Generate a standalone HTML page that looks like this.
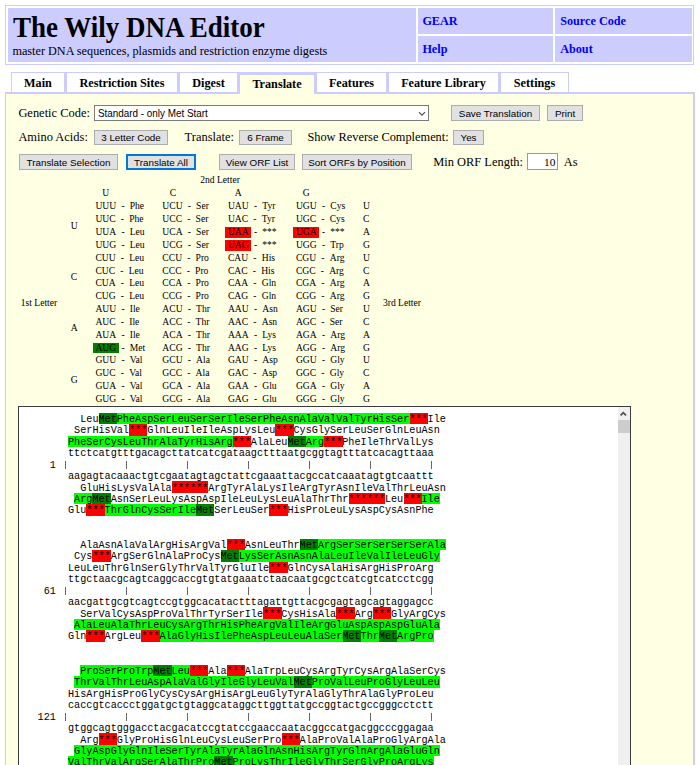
<!DOCTYPE html>
<html><head><meta charset="utf-8"><style>
html,body{margin:0;padding:0;background:#fff;width:700px;height:765px;overflow:hidden;position:relative}
.t{position:absolute;line-height:0;white-space:pre}
.r{position:absolute}
.cp{padding:0 2.75px}
.seq{position:absolute;white-space:pre;font-family:'Liberation Mono',monospace;color:#000;overflow:hidden;width:549px;height:360px}
</style></head><body>
<div class="r" style="left:5px;top:5px;width:689px;height:60px;border:1px solid #ccccff;box-sizing:border-box"></div>
<div class="r" style="left:8px;top:8px;width:408px;height:54px;background:#ccccff"></div>
<div class="r" style="left:418px;top:8px;width:135px;height:26px;background:#ccccff"></div>
<div class="r" style="left:555px;top:8px;width:137px;height:26px;background:#ccccff"></div>
<div class="r" style="left:418px;top:36px;width:135px;height:26px;background:#ccccff"></div>
<div class="r" style="left:555px;top:36px;width:137px;height:26px;background:#ccccff"></div>
<div class="t" style="left:13.00px;top:27.59px;font-family:'Liberation Serif', serif;font-size:27.0px;font-weight:bold;color:#000;transform:scale(1,1.06);transform-origin:0 9.11px">The Wily DNA Editor</div>
<div class="t" style="left:12.40px;top:50.98px;font-family:'Liberation Serif', serif;font-size:12.22px;font-weight:normal;color:#000;">master DNA sequences, plasmids and restriction enzyme digests</div>
<div class="t" style="left:422.40px;top:20.68px;font-family:'Liberation Serif', serif;font-size:12.2px;font-weight:bold;color:#0000ff;">GEAR</div>
<div class="t" style="left:422.40px;top:49.08px;font-family:'Liberation Serif', serif;font-size:12.2px;font-weight:bold;color:#0000ff;">Help</div>
<div class="t" style="left:560.20px;top:20.98px;font-family:'Liberation Serif', serif;font-size:12.2px;font-weight:bold;color:#0000ff;">Source Code</div>
<div class="t" style="left:560.20px;top:48.98px;font-family:'Liberation Serif', serif;font-size:12.2px;font-weight:bold;color:#0000ff;">About</div>
<div class="r" style="left:5px;top:92px;width:690px;height:700px;background:#ffffe4;border-top:2px solid #ccccff;border-left:1px solid #ccccff;border-right:2px solid #ccccff;box-sizing:border-box"></div>
<div class="r" style="left:11px;top:72px;width:558px;height:22px;background:#ccccff"></div>
<div class="r" style="left:12px;top:73px;width:52px;height:19px;background:#fff"></div>
<div class="t" style="left:12px;width:52px;text-align:center;top:82.58px;font-family:'Liberation Serif', serif;font-size:12.2px;font-weight:bold">Main</div>
<div class="r" style="left:67px;top:73px;width:110px;height:19px;background:#fff"></div>
<div class="t" style="left:67px;width:110px;text-align:center;top:82.58px;font-family:'Liberation Serif', serif;font-size:12.2px;font-weight:bold">Restriction Sites</div>
<div class="r" style="left:180px;top:73px;width:57px;height:19px;background:#fff"></div>
<div class="t" style="left:180px;width:57px;text-align:center;top:82.58px;font-family:'Liberation Serif', serif;font-size:12.2px;font-weight:bold">Digest</div>
<div class="r" style="left:240px;top:73px;width:74px;height:2px;background:#ccccff"></div>
<div class="r" style="left:240px;top:75px;width:74px;height:20px;background:#ffffe4"></div>
<div class="t" style="left:240px;width:74px;text-align:center;top:84.38px;font-family:'Liberation Serif', serif;font-size:12.2px;font-weight:bold">Translate</div>
<div class="r" style="left:317px;top:73px;width:69px;height:19px;background:#fff"></div>
<div class="t" style="left:317px;width:69px;text-align:center;top:82.58px;font-family:'Liberation Serif', serif;font-size:12.2px;font-weight:bold">Features</div>
<div class="r" style="left:389px;top:73px;width:109px;height:19px;background:#fff"></div>
<div class="t" style="left:389px;width:109px;text-align:center;top:82.58px;font-family:'Liberation Serif', serif;font-size:12.2px;font-weight:bold">Feature Library</div>
<div class="r" style="left:501px;top:73px;width:67px;height:19px;background:#fff"></div>
<div class="t" style="left:501px;width:67px;text-align:center;top:82.58px;font-family:'Liberation Serif', serif;font-size:12.2px;font-weight:bold">Settings</div>
<div class="t" style="left:18.40px;top:112.50px;font-family:'Liberation Serif', serif;font-size:12.45px;font-weight:normal;color:#000;">Genetic Code:</div>
<div class="r" style="left:94px;top:105px;width:335px;height:16px;background:#fff;border:1px solid #7a7a7a;box-sizing:border-box"></div>
<div class="t" style="left:98.00px;top:113.57px;font-family:'Liberation Sans', sans-serif;font-size:9.9px;font-weight:normal;color:#000;transform:scale(1,1.07);transform-origin:0 3.43px">Standard - only Met Start</div>
<svg class="r" style="left:416px;top:109px" width="12" height="9"><path d="M3 3.2 L6 6.2 L9 3.2" fill="none" stroke="#4a4a4a" stroke-width="1.1"/></svg>
<div class="r" style="left:451px;top:105px;width:89px;height:16px;background:#e1e1e1;border:1px solid #adadad;box-sizing:border-box"></div>
<div class="t" style="left:451px;width:89px;text-align:center;top:113.59px;font-family:'Liberation Sans', sans-serif;font-size:9.85px;color:#000">Save Translation</div>
<div class="r" style="left:547px;top:105px;width:36px;height:16px;background:#e1e1e1;border:1px solid #adadad;box-sizing:border-box"></div>
<div class="t" style="left:547px;width:36px;text-align:center;top:113.59px;font-family:'Liberation Sans', sans-serif;font-size:9.85px;color:#000">Print</div>
<div class="t" style="left:18.40px;top:137.20px;font-family:'Liberation Serif', serif;font-size:12.45px;font-weight:normal;color:#000;">Amino Acids:</div>
<div class="r" style="left:94px;top:130px;width:74px;height:15px;background:#e1e1e1;border:1px solid #adadad;box-sizing:border-box"></div>
<div class="t" style="left:94px;width:74px;text-align:center;top:138.09px;font-family:'Liberation Sans', sans-serif;font-size:9.85px;color:#000">3 Letter Code</div>
<div class="t" style="left:184.60px;top:137.20px;font-family:'Liberation Serif', serif;font-size:12.45px;font-weight:normal;color:#000;">Translate:</div>
<div class="r" style="left:239px;top:130px;width:53px;height:15px;background:#e1e1e1;border:1px solid #adadad;box-sizing:border-box"></div>
<div class="t" style="left:239px;width:53px;text-align:center;top:138.09px;font-family:'Liberation Sans', sans-serif;font-size:9.85px;color:#000">6 Frame</div>
<div class="t" style="left:307.40px;top:137.23px;font-family:'Liberation Serif', serif;font-size:12.35px;font-weight:normal;color:#000;">Show Reverse Complement:</div>
<div class="r" style="left:453px;top:130px;width:31px;height:15px;background:#e1e1e1;border:1px solid #adadad;box-sizing:border-box"></div>
<div class="t" style="left:453px;width:31px;text-align:center;top:138.09px;font-family:'Liberation Sans', sans-serif;font-size:9.85px;color:#000">Yes</div>
<div class="r" style="left:19px;top:154px;width:99px;height:16px;background:#e1e1e1;border:1px solid #adadad;box-sizing:border-box"></div>
<div class="t" style="left:19px;width:99px;text-align:center;top:162.59px;font-family:'Liberation Sans', sans-serif;font-size:9.85px;color:#000">Translate Selection</div>
<div class="r" style="left:126px;top:154px;width:70px;height:16px;background:#e1e1e1;border:2px solid #0078d7;box-sizing:border-box"></div>
<div class="t" style="left:126px;width:70px;text-align:center;top:162.59px;font-family:'Liberation Sans', sans-serif;font-size:9.85px;color:#000">Translate All</div>
<div class="r" style="left:219px;top:154px;width:76px;height:16px;background:#e1e1e1;border:1px solid #adadad;box-sizing:border-box"></div>
<div class="t" style="left:219px;width:76px;text-align:center;top:162.59px;font-family:'Liberation Sans', sans-serif;font-size:9.85px;color:#000">View ORF List</div>
<div class="r" style="left:302px;top:154px;width:110px;height:16px;background:#e1e1e1;border:1px solid #adadad;box-sizing:border-box"></div>
<div class="t" style="left:302px;width:110px;text-align:center;top:162.59px;font-family:'Liberation Sans', sans-serif;font-size:9.85px;color:#000">Sort ORFs by Position</div>
<div class="t" style="left:433.20px;top:161.60px;font-family:'Liberation Serif', serif;font-size:12.45px;font-weight:normal;color:#000;">Min ORF Length:</div>
<div class="r" style="left:527px;top:153px;width:31px;height:17px;background:#fff;border:1px solid #9a9a9a;box-sizing:border-box"></div>
<div class="t" style="left:544.00px;top:162.15px;font-family:'Liberation Serif', serif;font-size:11.4px;font-weight:normal;color:#000;">10</div>
<div class="t" style="left:563.70px;top:161.60px;font-family:'Liberation Serif', serif;font-size:12.45px;font-weight:normal;color:#000;">As</div>
<div class="t" style="left:200.20px;top:180.46px;font-family:'Liberation Serif', serif;font-size:9.6px;font-weight:normal;color:#000;">2nd Letter</div>
<div class="t" style="left:102.30px;top:193.06px;font-family:'Liberation Serif', serif;font-size:9.6px;font-weight:normal;color:#000;">U</div>
<div class="t" style="left:169.80px;top:193.06px;font-family:'Liberation Serif', serif;font-size:9.6px;font-weight:normal;color:#000;">C</div>
<div class="t" style="left:234.80px;top:193.06px;font-family:'Liberation Serif', serif;font-size:9.6px;font-weight:normal;color:#000;">A</div>
<div class="t" style="left:302.80px;top:193.06px;font-family:'Liberation Serif', serif;font-size:9.6px;font-weight:normal;color:#000;">G</div>
<div class="t" style="left:92.70px;top:206.46px;font-family:'Liberation Serif', serif;font-size:9.6px"><span class="cp">UUU</span> - <span class="cp">Phe</span></div>
<div class="t" style="left:159.60px;top:206.46px;font-family:'Liberation Serif', serif;font-size:9.6px"><span class="cp">UCU</span> - <span class="cp">Ser</span></div>
<div class="t" style="left:225.20px;top:206.46px;font-family:'Liberation Serif', serif;font-size:9.6px"><span class="cp">UAU</span> - <span class="cp">Tyr</span></div>
<div class="t" style="left:293.20px;top:206.46px;font-family:'Liberation Serif', serif;font-size:9.6px"><span class="cp">UGU</span> - <span class="cp">Cys</span></div>
<div class="t" style="left:362.90px;top:206.46px;font-family:'Liberation Serif', serif;font-size:9.6px;font-weight:normal;color:#000;">U</div>
<div class="t" style="left:92.70px;top:219.29px;font-family:'Liberation Serif', serif;font-size:9.6px"><span class="cp">UUC</span> - <span class="cp">Phe</span></div>
<div class="t" style="left:159.60px;top:219.29px;font-family:'Liberation Serif', serif;font-size:9.6px"><span class="cp">UCC</span> - <span class="cp">Ser</span></div>
<div class="t" style="left:225.20px;top:219.29px;font-family:'Liberation Serif', serif;font-size:9.6px"><span class="cp">UAC</span> - <span class="cp">Tyr</span></div>
<div class="t" style="left:293.20px;top:219.29px;font-family:'Liberation Serif', serif;font-size:9.6px"><span class="cp">UGC</span> - <span class="cp">Cys</span></div>
<div class="t" style="left:362.90px;top:219.29px;font-family:'Liberation Serif', serif;font-size:9.6px;font-weight:normal;color:#000;">C</div>
<div class="t" style="left:92.70px;top:232.12px;font-family:'Liberation Serif', serif;font-size:9.6px"><span class="cp">UUA</span> - <span class="cp">Leu</span></div>
<div class="t" style="left:159.60px;top:232.12px;font-family:'Liberation Serif', serif;font-size:9.6px"><span class="cp">UCA</span> - <span class="cp">Ser</span></div>
<div class="r" style="left:225.20px;top:227.06px;width:26.3px;height:10.7px;background:#ff0000"></div>
<div class="t" style="left:225.20px;top:232.12px;font-family:'Liberation Serif', serif;font-size:9.6px"><span class="cp">UAA</span> - <span class="cp">***</span></div>
<div class="r" style="left:293.20px;top:227.06px;width:26.3px;height:10.7px;background:#ff0000"></div>
<div class="t" style="left:293.20px;top:232.12px;font-family:'Liberation Serif', serif;font-size:9.6px"><span class="cp">UGA</span> - <span class="cp">***</span></div>
<div class="t" style="left:362.90px;top:232.12px;font-family:'Liberation Serif', serif;font-size:9.6px;font-weight:normal;color:#000;">A</div>
<div class="t" style="left:92.70px;top:244.95px;font-family:'Liberation Serif', serif;font-size:9.6px"><span class="cp">UUG</span> - <span class="cp">Leu</span></div>
<div class="t" style="left:159.60px;top:244.95px;font-family:'Liberation Serif', serif;font-size:9.6px"><span class="cp">UCG</span> - <span class="cp">Ser</span></div>
<div class="r" style="left:225.20px;top:239.89px;width:26.3px;height:10.7px;background:#ff0000"></div>
<div class="t" style="left:225.20px;top:244.95px;font-family:'Liberation Serif', serif;font-size:9.6px"><span class="cp">UAG</span> - <span class="cp">***</span></div>
<div class="t" style="left:293.20px;top:244.95px;font-family:'Liberation Serif', serif;font-size:9.6px"><span class="cp">UGG</span> - <span class="cp">Trp</span></div>
<div class="t" style="left:362.90px;top:244.95px;font-family:'Liberation Serif', serif;font-size:9.6px;font-weight:normal;color:#000;">G</div>
<div class="t" style="left:70.70px;top:225.70px;font-family:'Liberation Serif', serif;font-size:9.6px;font-weight:normal;color:#000;">U</div>
<div class="t" style="left:92.70px;top:257.78px;font-family:'Liberation Serif', serif;font-size:9.6px"><span class="cp">CUU</span> - <span class="cp">Leu</span></div>
<div class="t" style="left:159.60px;top:257.78px;font-family:'Liberation Serif', serif;font-size:9.6px"><span class="cp">CCU</span> - <span class="cp">Pro</span></div>
<div class="t" style="left:225.20px;top:257.78px;font-family:'Liberation Serif', serif;font-size:9.6px"><span class="cp">CAU</span> - <span class="cp">His</span></div>
<div class="t" style="left:293.20px;top:257.78px;font-family:'Liberation Serif', serif;font-size:9.6px"><span class="cp">CGU</span> - <span class="cp">Arg</span></div>
<div class="t" style="left:362.90px;top:257.78px;font-family:'Liberation Serif', serif;font-size:9.6px;font-weight:normal;color:#000;">U</div>
<div class="t" style="left:92.70px;top:270.61px;font-family:'Liberation Serif', serif;font-size:9.6px"><span class="cp">CUC</span> - <span class="cp">Leu</span></div>
<div class="t" style="left:159.60px;top:270.61px;font-family:'Liberation Serif', serif;font-size:9.6px"><span class="cp">CCC</span> - <span class="cp">Pro</span></div>
<div class="t" style="left:225.20px;top:270.61px;font-family:'Liberation Serif', serif;font-size:9.6px"><span class="cp">CAC</span> - <span class="cp">His</span></div>
<div class="t" style="left:293.20px;top:270.61px;font-family:'Liberation Serif', serif;font-size:9.6px"><span class="cp">CGC</span> - <span class="cp">Arg</span></div>
<div class="t" style="left:362.90px;top:270.61px;font-family:'Liberation Serif', serif;font-size:9.6px;font-weight:normal;color:#000;">C</div>
<div class="t" style="left:92.70px;top:283.44px;font-family:'Liberation Serif', serif;font-size:9.6px"><span class="cp">CUA</span> - <span class="cp">Leu</span></div>
<div class="t" style="left:159.60px;top:283.44px;font-family:'Liberation Serif', serif;font-size:9.6px"><span class="cp">CCA</span> - <span class="cp">Pro</span></div>
<div class="t" style="left:225.20px;top:283.44px;font-family:'Liberation Serif', serif;font-size:9.6px"><span class="cp">CAA</span> - <span class="cp">Gln</span></div>
<div class="t" style="left:293.20px;top:283.44px;font-family:'Liberation Serif', serif;font-size:9.6px"><span class="cp">CGA</span> - <span class="cp">Arg</span></div>
<div class="t" style="left:362.90px;top:283.44px;font-family:'Liberation Serif', serif;font-size:9.6px;font-weight:normal;color:#000;">A</div>
<div class="t" style="left:92.70px;top:296.27px;font-family:'Liberation Serif', serif;font-size:9.6px"><span class="cp">CUG</span> - <span class="cp">Leu</span></div>
<div class="t" style="left:159.60px;top:296.27px;font-family:'Liberation Serif', serif;font-size:9.6px"><span class="cp">CCG</span> - <span class="cp">Pro</span></div>
<div class="t" style="left:225.20px;top:296.27px;font-family:'Liberation Serif', serif;font-size:9.6px"><span class="cp">CAG</span> - <span class="cp">Gln</span></div>
<div class="t" style="left:293.20px;top:296.27px;font-family:'Liberation Serif', serif;font-size:9.6px"><span class="cp">CGG</span> - <span class="cp">Arg</span></div>
<div class="t" style="left:362.90px;top:296.27px;font-family:'Liberation Serif', serif;font-size:9.6px;font-weight:normal;color:#000;">G</div>
<div class="t" style="left:70.70px;top:277.02px;font-family:'Liberation Serif', serif;font-size:9.6px;font-weight:normal;color:#000;">C</div>
<div class="t" style="left:92.70px;top:309.10px;font-family:'Liberation Serif', serif;font-size:9.6px"><span class="cp">AUU</span> - <span class="cp">Ile</span></div>
<div class="t" style="left:159.60px;top:309.10px;font-family:'Liberation Serif', serif;font-size:9.6px"><span class="cp">ACU</span> - <span class="cp">Thr</span></div>
<div class="t" style="left:225.20px;top:309.10px;font-family:'Liberation Serif', serif;font-size:9.6px"><span class="cp">AAU</span> - <span class="cp">Asn</span></div>
<div class="t" style="left:293.20px;top:309.10px;font-family:'Liberation Serif', serif;font-size:9.6px"><span class="cp">AGU</span> - <span class="cp">Ser</span></div>
<div class="t" style="left:362.90px;top:309.10px;font-family:'Liberation Serif', serif;font-size:9.6px;font-weight:normal;color:#000;">U</div>
<div class="t" style="left:92.70px;top:321.93px;font-family:'Liberation Serif', serif;font-size:9.6px"><span class="cp">AUC</span> - <span class="cp">Ile</span></div>
<div class="t" style="left:159.60px;top:321.93px;font-family:'Liberation Serif', serif;font-size:9.6px"><span class="cp">ACC</span> - <span class="cp">Thr</span></div>
<div class="t" style="left:225.20px;top:321.93px;font-family:'Liberation Serif', serif;font-size:9.6px"><span class="cp">AAC</span> - <span class="cp">Asn</span></div>
<div class="t" style="left:293.20px;top:321.93px;font-family:'Liberation Serif', serif;font-size:9.6px"><span class="cp">AGC</span> - <span class="cp">Ser</span></div>
<div class="t" style="left:362.90px;top:321.93px;font-family:'Liberation Serif', serif;font-size:9.6px;font-weight:normal;color:#000;">C</div>
<div class="t" style="left:92.70px;top:334.76px;font-family:'Liberation Serif', serif;font-size:9.6px"><span class="cp">AUA</span> - <span class="cp">Ile</span></div>
<div class="t" style="left:159.60px;top:334.76px;font-family:'Liberation Serif', serif;font-size:9.6px"><span class="cp">ACA</span> - <span class="cp">Thr</span></div>
<div class="t" style="left:225.20px;top:334.76px;font-family:'Liberation Serif', serif;font-size:9.6px"><span class="cp">AAA</span> - <span class="cp">Lys</span></div>
<div class="t" style="left:293.20px;top:334.76px;font-family:'Liberation Serif', serif;font-size:9.6px"><span class="cp">AGA</span> - <span class="cp">Arg</span></div>
<div class="t" style="left:362.90px;top:334.76px;font-family:'Liberation Serif', serif;font-size:9.6px;font-weight:normal;color:#000;">A</div>
<div class="r" style="left:92.70px;top:342.53px;width:26.3px;height:10.7px;background:#008000"></div>
<div class="t" style="left:92.70px;top:347.59px;font-family:'Liberation Serif', serif;font-size:9.6px"><span class="cp">AUG</span> - <span class="cp">Met</span></div>
<div class="t" style="left:159.60px;top:347.59px;font-family:'Liberation Serif', serif;font-size:9.6px"><span class="cp">ACG</span> - <span class="cp">Thr</span></div>
<div class="t" style="left:225.20px;top:347.59px;font-family:'Liberation Serif', serif;font-size:9.6px"><span class="cp">AAG</span> - <span class="cp">Lys</span></div>
<div class="t" style="left:293.20px;top:347.59px;font-family:'Liberation Serif', serif;font-size:9.6px"><span class="cp">AGG</span> - <span class="cp">Arg</span></div>
<div class="t" style="left:362.90px;top:347.59px;font-family:'Liberation Serif', serif;font-size:9.6px;font-weight:normal;color:#000;">G</div>
<div class="t" style="left:70.70px;top:328.34px;font-family:'Liberation Serif', serif;font-size:9.6px;font-weight:normal;color:#000;">A</div>
<div class="t" style="left:92.70px;top:360.42px;font-family:'Liberation Serif', serif;font-size:9.6px"><span class="cp">GUU</span> - <span class="cp">Val</span></div>
<div class="t" style="left:159.60px;top:360.42px;font-family:'Liberation Serif', serif;font-size:9.6px"><span class="cp">GCU</span> - <span class="cp">Ala</span></div>
<div class="t" style="left:225.20px;top:360.42px;font-family:'Liberation Serif', serif;font-size:9.6px"><span class="cp">GAU</span> - <span class="cp">Asp</span></div>
<div class="t" style="left:293.20px;top:360.42px;font-family:'Liberation Serif', serif;font-size:9.6px"><span class="cp">GGU</span> - <span class="cp">Gly</span></div>
<div class="t" style="left:362.90px;top:360.42px;font-family:'Liberation Serif', serif;font-size:9.6px;font-weight:normal;color:#000;">U</div>
<div class="t" style="left:92.70px;top:373.25px;font-family:'Liberation Serif', serif;font-size:9.6px"><span class="cp">GUC</span> - <span class="cp">Val</span></div>
<div class="t" style="left:159.60px;top:373.25px;font-family:'Liberation Serif', serif;font-size:9.6px"><span class="cp">GCC</span> - <span class="cp">Ala</span></div>
<div class="t" style="left:225.20px;top:373.25px;font-family:'Liberation Serif', serif;font-size:9.6px"><span class="cp">GAC</span> - <span class="cp">Asp</span></div>
<div class="t" style="left:293.20px;top:373.25px;font-family:'Liberation Serif', serif;font-size:9.6px"><span class="cp">GGC</span> - <span class="cp">Gly</span></div>
<div class="t" style="left:362.90px;top:373.25px;font-family:'Liberation Serif', serif;font-size:9.6px;font-weight:normal;color:#000;">C</div>
<div class="t" style="left:92.70px;top:386.08px;font-family:'Liberation Serif', serif;font-size:9.6px"><span class="cp">GUA</span> - <span class="cp">Val</span></div>
<div class="t" style="left:159.60px;top:386.08px;font-family:'Liberation Serif', serif;font-size:9.6px"><span class="cp">GCA</span> - <span class="cp">Ala</span></div>
<div class="t" style="left:225.20px;top:386.08px;font-family:'Liberation Serif', serif;font-size:9.6px"><span class="cp">GAA</span> - <span class="cp">Glu</span></div>
<div class="t" style="left:293.20px;top:386.08px;font-family:'Liberation Serif', serif;font-size:9.6px"><span class="cp">GGA</span> - <span class="cp">Gly</span></div>
<div class="t" style="left:362.90px;top:386.08px;font-family:'Liberation Serif', serif;font-size:9.6px;font-weight:normal;color:#000;">A</div>
<div class="t" style="left:92.70px;top:398.91px;font-family:'Liberation Serif', serif;font-size:9.6px"><span class="cp">GUG</span> - <span class="cp">Val</span></div>
<div class="t" style="left:159.60px;top:398.91px;font-family:'Liberation Serif', serif;font-size:9.6px"><span class="cp">GCG</span> - <span class="cp">Ala</span></div>
<div class="t" style="left:225.20px;top:398.91px;font-family:'Liberation Serif', serif;font-size:9.6px"><span class="cp">GAG</span> - <span class="cp">Glu</span></div>
<div class="t" style="left:293.20px;top:398.91px;font-family:'Liberation Serif', serif;font-size:9.6px"><span class="cp">GGG</span> - <span class="cp">Gly</span></div>
<div class="t" style="left:362.90px;top:398.91px;font-family:'Liberation Serif', serif;font-size:9.6px;font-weight:normal;color:#000;">G</div>
<div class="t" style="left:70.70px;top:379.66px;font-family:'Liberation Serif', serif;font-size:9.6px;font-weight:normal;color:#000;">G</div>
<div class="t" style="left:20.70px;top:302.68px;font-family:'Liberation Serif', serif;font-size:9.6px;font-weight:normal;color:#000;">1st Letter</div>
<div class="t" style="left:382.90px;top:302.68px;font-family:'Liberation Serif', serif;font-size:9.6px;font-weight:normal;color:#000;">3rd Letter</div>
<div class="r" style="left:18px;top:406px;width:613px;height:400px;background:#fff;border:1px solid #3c3c3c;box-sizing:border-box"></div>
<div class="r" style="left:618px;top:407px;width:12px;height:400px;background:#f0f0f0"></div>
<div class="r" style="left:618px;top:420px;width:12px;height:13px;background:#cdcdcd"></div>
<svg class="r" style="left:618px;top:407px" width="12" height="13"><path d="M2.6 8.4 L5.3 5.6 L8 8.4" fill="none" stroke="#505050" stroke-width="1.7"/></svg>
<div class="r" style="left:98.55px;top:412.70px;width:18.30px;height:11.45px;background:#008000"></div>
<div class="r" style="left:116.85px;top:412.70px;width:292.80px;height:11.45px;background:#00ff00"></div>
<div class="r" style="left:409.65px;top:412.70px;width:18.30px;height:11.45px;background:#ff0000"></div>
<div class="r" style="left:129.05px;top:424.15px;width:18.30px;height:11.45px;background:#ff0000"></div>
<div class="r" style="left:275.45px;top:424.15px;width:18.30px;height:11.45px;background:#ff0000"></div>
<div class="r" style="left:68.05px;top:435.60px;width:164.70px;height:11.45px;background:#00ff00"></div>
<div class="r" style="left:232.75px;top:435.60px;width:18.30px;height:11.45px;background:#ff0000"></div>
<div class="r" style="left:287.65px;top:435.60px;width:18.30px;height:11.45px;background:#008000"></div>
<div class="r" style="left:305.95px;top:435.60px;width:18.30px;height:11.45px;background:#00ff00"></div>
<div class="r" style="left:324.25px;top:435.60px;width:18.30px;height:11.45px;background:#ff0000"></div>
<div class="r" style="left:171.75px;top:481.41px;width:36.60px;height:11.45px;background:#ff0000"></div>
<div class="r" style="left:74.15px;top:492.86px;width:18.30px;height:11.45px;background:#00ff00"></div>
<div class="r" style="left:92.45px;top:492.86px;width:18.30px;height:11.45px;background:#008000"></div>
<div class="r" style="left:348.65px;top:492.86px;width:36.60px;height:11.45px;background:#ff0000"></div>
<div class="r" style="left:403.55px;top:492.86px;width:18.30px;height:11.45px;background:#ff0000"></div>
<div class="r" style="left:421.85px;top:492.86px;width:18.30px;height:11.45px;background:#00ff00"></div>
<div class="r" style="left:86.35px;top:504.32px;width:18.30px;height:11.45px;background:#ff0000"></div>
<div class="r" style="left:104.65px;top:504.32px;width:91.50px;height:11.45px;background:#00ff00"></div>
<div class="r" style="left:196.15px;top:504.32px;width:18.30px;height:11.45px;background:#008000"></div>
<div class="r" style="left:269.35px;top:504.32px;width:18.30px;height:11.45px;background:#ff0000"></div>
<div class="r" style="left:226.65px;top:538.67px;width:18.30px;height:11.45px;background:#ff0000"></div>
<div class="r" style="left:299.85px;top:538.67px;width:18.30px;height:11.45px;background:#008000"></div>
<div class="r" style="left:318.15px;top:538.67px;width:128.10px;height:11.45px;background:#00ff00"></div>
<div class="r" style="left:92.45px;top:550.12px;width:18.30px;height:11.45px;background:#ff0000"></div>
<div class="r" style="left:220.55px;top:550.12px;width:18.30px;height:11.45px;background:#008000"></div>
<div class="r" style="left:238.85px;top:550.12px;width:201.30px;height:11.45px;background:#00ff00"></div>
<div class="r" style="left:269.35px;top:561.58px;width:18.30px;height:11.45px;background:#ff0000"></div>
<div class="r" style="left:263.25px;top:607.38px;width:18.30px;height:11.45px;background:#ff0000"></div>
<div class="r" style="left:336.45px;top:607.38px;width:18.30px;height:11.45px;background:#ff0000"></div>
<div class="r" style="left:373.05px;top:607.38px;width:18.30px;height:11.45px;background:#ff0000"></div>
<div class="r" style="left:74.15px;top:618.84px;width:366.00px;height:11.45px;background:#00ff00"></div>
<div class="r" style="left:86.35px;top:630.29px;width:18.30px;height:11.45px;background:#ff0000"></div>
<div class="r" style="left:141.25px;top:630.29px;width:18.30px;height:11.45px;background:#ff0000"></div>
<div class="r" style="left:159.55px;top:630.29px;width:183.00px;height:11.45px;background:#00ff00"></div>
<div class="r" style="left:342.55px;top:630.29px;width:18.30px;height:11.45px;background:#008000"></div>
<div class="r" style="left:360.85px;top:630.29px;width:18.30px;height:11.45px;background:#00ff00"></div>
<div class="r" style="left:379.15px;top:630.29px;width:18.30px;height:11.45px;background:#008000"></div>
<div class="r" style="left:397.45px;top:630.29px;width:36.60px;height:11.45px;background:#00ff00"></div>
<div class="r" style="left:80.25px;top:664.64px;width:73.20px;height:11.45px;background:#00ff00"></div>
<div class="r" style="left:153.45px;top:664.64px;width:18.30px;height:11.45px;background:#008000"></div>
<div class="r" style="left:171.75px;top:664.64px;width:18.30px;height:11.45px;background:#00ff00"></div>
<div class="r" style="left:190.05px;top:664.64px;width:18.30px;height:11.45px;background:#ff0000"></div>
<div class="r" style="left:226.65px;top:664.64px;width:18.30px;height:11.45px;background:#ff0000"></div>
<div class="r" style="left:74.15px;top:676.10px;width:219.60px;height:11.45px;background:#00ff00"></div>
<div class="r" style="left:293.75px;top:676.10px;width:18.30px;height:11.45px;background:#008000"></div>
<div class="r" style="left:312.05px;top:676.10px;width:128.10px;height:11.45px;background:#00ff00"></div>
<div class="r" style="left:98.55px;top:733.36px;width:18.30px;height:11.45px;background:#ff0000"></div>
<div class="r" style="left:281.55px;top:733.36px;width:18.30px;height:11.45px;background:#ff0000"></div>
<div class="r" style="left:74.15px;top:744.81px;width:366.00px;height:11.45px;background:#00ff00"></div>
<div class="r" style="left:68.05px;top:756.26px;width:146.40px;height:11.45px;background:#00ff00"></div>
<div class="r" style="left:214.45px;top:756.26px;width:18.30px;height:11.45px;background:#008000"></div>
<div class="r" style="left:232.75px;top:756.26px;width:201.30px;height:11.45px;background:#00ff00"></div>
<div class="r" style="left:64.50px;top:461.41px;width:1px;height:7.3px;background:#666"></div>
<div class="r" style="left:125.50px;top:461.41px;width:1px;height:7.3px;background:#666"></div>
<div class="r" style="left:186.50px;top:461.41px;width:1px;height:7.3px;background:#666"></div>
<div class="r" style="left:247.50px;top:461.41px;width:1px;height:7.3px;background:#666"></div>
<div class="r" style="left:308.50px;top:461.41px;width:1px;height:7.3px;background:#666"></div>
<div class="r" style="left:369.50px;top:461.41px;width:1px;height:7.3px;background:#666"></div>
<div class="r" style="left:430.50px;top:461.41px;width:1px;height:7.3px;background:#666"></div>
<div class="r" style="left:64.50px;top:587.38px;width:1px;height:7.3px;background:#666"></div>
<div class="r" style="left:125.50px;top:587.38px;width:1px;height:7.3px;background:#666"></div>
<div class="r" style="left:186.50px;top:587.38px;width:1px;height:7.3px;background:#666"></div>
<div class="r" style="left:247.50px;top:587.38px;width:1px;height:7.3px;background:#666"></div>
<div class="r" style="left:308.50px;top:587.38px;width:1px;height:7.3px;background:#666"></div>
<div class="r" style="left:369.50px;top:587.38px;width:1px;height:7.3px;background:#666"></div>
<div class="r" style="left:430.50px;top:587.38px;width:1px;height:7.3px;background:#666"></div>
<div class="r" style="left:64.50px;top:713.35px;width:1px;height:7.3px;background:#666"></div>
<div class="r" style="left:125.50px;top:713.35px;width:1px;height:7.3px;background:#666"></div>
<div class="r" style="left:186.50px;top:713.35px;width:1px;height:7.3px;background:#666"></div>
<div class="r" style="left:247.50px;top:713.35px;width:1px;height:7.3px;background:#666"></div>
<div class="r" style="left:308.50px;top:713.35px;width:1px;height:7.3px;background:#666"></div>
<div class="r" style="left:369.50px;top:713.35px;width:1px;height:7.3px;background:#666"></div>
<div class="r" style="left:430.50px;top:713.35px;width:1px;height:7.3px;background:#666"></div>
<div class="seq" style="left:19.250px;top:413.865px;font-size:10.17px;line-height:11.452px">          LeuMetPheAspSerLeuSerSerIleSerPheAsnAlaValValTyrHisSer***Ile
         SerHisVal***GlnLeuIleIleAspLysLeu***CysGlySerLeuSerGlnLeuAsn
        PheSerCysLeuThrAlaTyrHisArg***AlaLeuMetArg***PheIleThrValLys
        ttctcatgtttgacagcttatcatcgataagctttaatgcggtagtttatcacagttaaa
     1
        aagagtacaaactgtcgaatagtagctattcgaaattacgccatcaaatagtgtcaattt
          GluHisLysValAla******ArgTyrAlaLysIleArgTyrAsnIleValThrLeuAsn
         ArgMetAsnSerLeuLysAspAspIleLeuLysLeuAlaThrThr******Leu***Ile
        Glu***ThrGlnCysSerIleMetSerLeuSer***HisProLeuLysAspCysAsnPhe


          AlaAsnAlaValArgHisArgVal***AsnLeuThrMetArgSerSerSerSerSerAla
         Cys***ArgSerGlnAlaProCysMetLysSerAsnAsnAlaLeuIleValIleLeuGly
        LeuLeuThrGlnSerGlyThrValTyrGluIle***GlnCysAlaHisArgHisProArg
        ttgctaacgcagtcaggcaccgtgtatgaaatctaacaatgcgctcatcgtcatcctcgg
    61
        aacgattgcgtcagtccgtggcacatactttagattgttacgcgagtagcagtaggagcc
          SerValCysAspProValThrTyrSerIle***CysHisAla***Arg***GlyArgCys
         AlaLeuAlaThrLeuCysArgThrHisPheArgValIleArgGluAspAspAspGluAla
        Gln***ArgLeu***AlaGlyHisIlePheAspLeuLeuAlaSerMetThrMetArgPro


          ProSerProTrpMetLeu***Ala***AlaTrpLeuCysArgTyrCysArgAlaSerCys
         ThrValThrLeuAspAlaValGlyIleGlyLeuValMetProValLeuProGlyLeuLeu
        HisArgHisProGlyCysCysArgHisArgLeuGlyTyrAlaGlyThrAlaGlyProLeu
        caccgtcaccctggatgctgtaggcataggcttggttatgccggtactgccgggcctctt
   121
        gtggcagtgggacctacgacatccgtatccgaaccaatacggccatgacggcccggagaa
          Arg***GlyProHisGlnLeuCysLeuSerPro***AlaProValAlaProGlyArgAla
         GlyAspGlyGlnIleSerTyrAlaTyrAlaGlnAsnHisArgTyrGlnArgAlaGluGln
        ValThrValArgSerAlaThrProMetProLysThrIleGlyThrSerGlyProArgLys

</div>
</body></html>
